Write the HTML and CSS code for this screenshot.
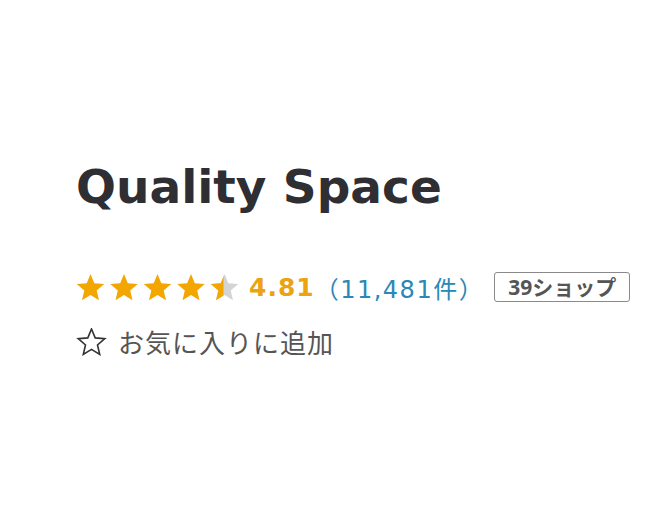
FILE: index.html
```html
<!DOCTYPE html>
<html lang="ja">
<head>
	<meta charset="UTF-8">
	<title>Quality Space</title>
	<link rel="stylesheet" href="styles.css">
</head>
<body>
	<div id="shop">
		<h1 class="name">Quality Space</h1>
		<div class="rating">
			<svg class="stars" width="164" height="27" viewBox="0 0 164 27">
				<defs>
					<polygon id="star" points="14.5,0 18.32,9.24 28.29,10.02 20.68,16.51 23.02,26.23 14.5,21 5.98,26.23 8.32,16.51 0.71,10.02 10.68,9.24"/>
					<clipPath id="half"><rect x="0" y="0" width="13.5" height="27"/></clipPath>
				</defs>
				<use href="#star" x="0" fill="#f3a600"/>
				<use href="#star" x="33.5" fill="#f3a600"/>
				<use href="#star" x="67" fill="#f3a600"/>
				<use href="#star" x="100.5" fill="#f3a600"/>
				<use href="#star" x="134" fill="#d4d4d4"/>
				<g transform="translate(134,0)" clip-path="url(#half)">
					<use href="#star" fill="#f3a600"/>
				</g>
			</svg>
			<span class="score">4.81</span>
			<a class="count" href="#">（11,481件）</a>
			<span class="shops">39ショップ</span>
		</div>
		<p class="fav">
			<svg class="fav-icon" width="31" height="28" viewBox="0 0 31 28">
				<polygon points="15.5,1 19.2,9.9 28.8,10.7 21.5,17 23.7,26.4 15.5,21.4 7.3,26.4 9.5,17 2.2,10.7 11.8,9.9" fill="none" stroke="#333" stroke-width="1.6"/>
			</svg>
			<span>お気に入りに追加</span>
		</p>
	</div>
</body>
</html>
```

FILE: styles.css
```css
*{
	margin: 0;
	padding: 0;
}
body{
	background-color: #fff;
	font-family: "DejaVu Sans", "Noto Sans CJK JP", sans-serif;
}
#shop{
	padding: 163px 0 0 76px;
}
#shop .name{
	font-size: 47px;
	line-height: 47px;
	font-weight: bold;
	color: #2e2e33;
}
#shop .rating{
	display: flex;
	align-items: center;
	margin-top: 62px;
	height: 30px;
}
#shop .stars{
	display: block;
	margin-right: 9px;
}
#shop .score{
	font-size: 25px;
	font-weight: bold;
	letter-spacing: 1px;
	color: #eca312;
}
#shop .count{
	font-size: 24px;
	letter-spacing: 1.5px;
	color: #2a87b8;
	text-decoration: none;
}
#shop .shops{
	margin-left: 10px;
	padding: 0 13px;
	height: 28px;
	line-height: 28px;
	border: 1px solid #8a8a8a;
	border-radius: 3px;
	font-size: 21px;
	font-weight: bold;
	color: #555;
	font-family: "Noto Sans", "Noto Sans CJK JP", sans-serif;
}
#shop .fav{
	display: flex;
	align-items: center;
	margin-top: 21px;
	font-size: 26px;
	color: #555;
	font-family: "Noto Sans CJK JP", sans-serif;
}
#shop .fav-icon{
	display: block;
	margin-right: 11px;
}
#shop .fav span{
	letter-spacing: 1px;
}
```
